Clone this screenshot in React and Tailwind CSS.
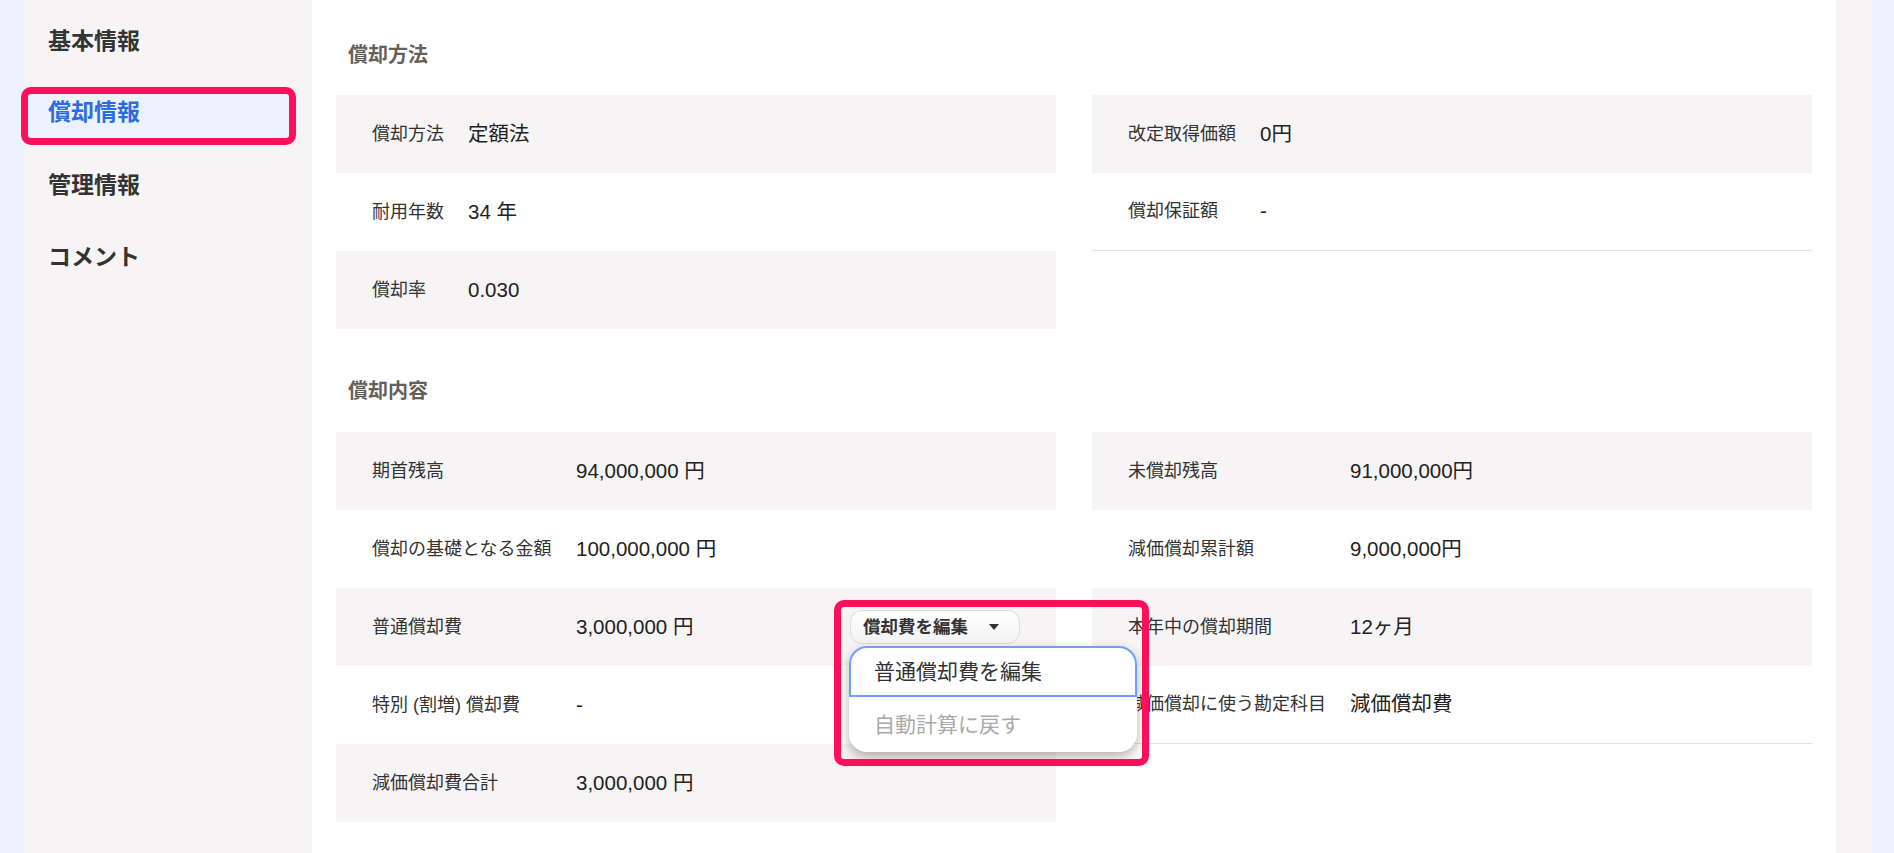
import React from 'react';

const font = "font-['Liberation_Sans','Noto_Sans_CJK_JP',sans-serif]";

const navItems = ['基本情報', '償却情報', '管理情報', 'コメント'];

const methodLeft = [
  { label: '償却方法', value: '定額法' },
  { label: '耐用年数', value: '34 年' },
  { label: '償却率', value: '0.030' },
];

const methodRight = [
  { label: '改定取得価額', value: '0円' },
  { label: '償却保証額', value: '-' },
];

const detailLeft = [
  { label: '期首残高', value: '94,000,000 円' },
  { label: '償却の基礎となる金額', value: '100,000,000 円' },
  { label: '普通償却費', value: '3,000,000 円', menu: true },
  { label: '特別 (割増) 償却費', value: '-' },
  { label: '減価償却費合計', value: '3,000,000 円' },
];

const detailRight = [
  { label: '未償却残高', value: '91,000,000円' },
  { label: '減価償却累計額', value: '9,000,000円' },
  { label: '本年中の償却期間', value: '12ヶ月' },
  { label: '減価償却に使う勘定科目', value: '減価償却費' },
];

// button + open menu, with the pink annotation frame drawn over it
const EditMenu = () => (
  <div className="relative">
    <button className="flex items-center h-[34px] w-[170px] pl-[12px] rounded-[12px] border border-[#dcdcdc] bg-gradient-to-b from-white to-[#f2f2f2] text-[17.5px] font-bold text-[#333]">
      償却費を編集
      <svg width="10" height="6" viewBox="0 0 10 6" className="ml-[21px]">
        <path d="M0 0 L10 0 L5 6 Z" fill="#333" />
      </svg>
    </button>
    <div className="absolute left-[-1px] top-[36px] w-[288px] z-20 bg-white rounded-[18px] shadow-[0_5px_12px_rgba(0,0,0,0.3)]">
      <div className="h-[51px] flex items-center pl-[23px] border-2 border-[#6fa0f7] rounded-t-[18px] text-[21px] text-[#333]">
        普通償却費を編集
      </div>
      <div className="h-[55px] flex items-center pl-[25px] text-[21px] text-[#aaa]">
        自動計算に戻す
      </div>
    </div>
    <div className="absolute left-[-16px] top-[-10px] w-[315px] h-[166px] z-30 border-[7px] border-[#ff0f5a] rounded-[10px] pointer-events-none" />
  </div>
);

const Row = ({ label, value, grey, labelW, menu, last }) => (
  <div
    className={`flex items-center h-[78px] pl-9 pr-9 ${grey ? 'bg-[#f6f4f5]' : 'bg-white'} ${last ? 'border-b border-[#e2e2e2]' : ''}`}
  >
    <div className={`${labelW} shrink-0 text-[18px] text-[#333]`}>{label}</div>
    <div className="flex-1 flex items-center justify-between">
      <span className="text-[20.5px] text-[#222]">{value}</span>
      {menu && <EditMenu />}
    </div>
  </div>
);

const Column = ({ rows, labelW, bordered }) => (
  <div>
    {rows.map((r, i) => (
      <Row
        key={r.label}
        {...r}
        grey={i % 2 === 0}
        labelW={labelW}
        last={bordered && i === rows.length - 1}
      />
    ))}
  </div>
);

export default function App() {
  return (
    <div className={`${font} bg-[#ebf2fd] h-[853px] pl-6 pr-[22px] overflow-hidden`}>
      <div className="flex h-full bg-[#f6f4f5]">
        {/* side navigation */}
        <nav className="w-[288px] shrink-0 pt-[5px]">
          {navItems.map((item) => {
            const active = item === '償却情報';
            return (
              <div key={item} className="relative h-[72px] flex items-center pl-6">
                {active && (
                  <span className="absolute left-[-3px] top-[10px] w-[275px] h-[58px] rounded-[10px] border-[7px] border-[#ff0f5a] bg-[#ebf2fd]" />
                )}
                <span
                  className={`relative text-[23px] leading-[32px] font-bold ${active ? 'text-[#2d6be2] -mt-[3px]' : 'text-[#333]'}`}
                >
                  {item}
                </span>
              </div>
            );
          })}
        </nav>

        {/* main panel */}
        <main className="w-[1524px] shrink-0 bg-white px-6">
          <h2 className="mt-[41px] mb-[26px] pl-3 text-[20px] leading-[28px] font-bold text-[#655e59]">
            償却方法
          </h2>
          <div className="grid grid-cols-2 gap-x-9 items-start">
            <Column rows={methodLeft} labelW="w-[96px]" />
            <Column rows={methodRight} labelW="w-[132px]" bordered />
          </div>

          <h2 className="mt-[48px] mb-[27px] pl-3 text-[20px] leading-[28px] font-bold text-[#655e59]">
            償却内容
          </h2>
          <div className="grid grid-cols-2 gap-x-9 items-start">
            <Column rows={detailLeft} labelW="w-[204px]" />
            <Column rows={detailRight} labelW="w-[222px]" bordered />
          </div>
        </main>
      </div>
    </div>
  );
}
